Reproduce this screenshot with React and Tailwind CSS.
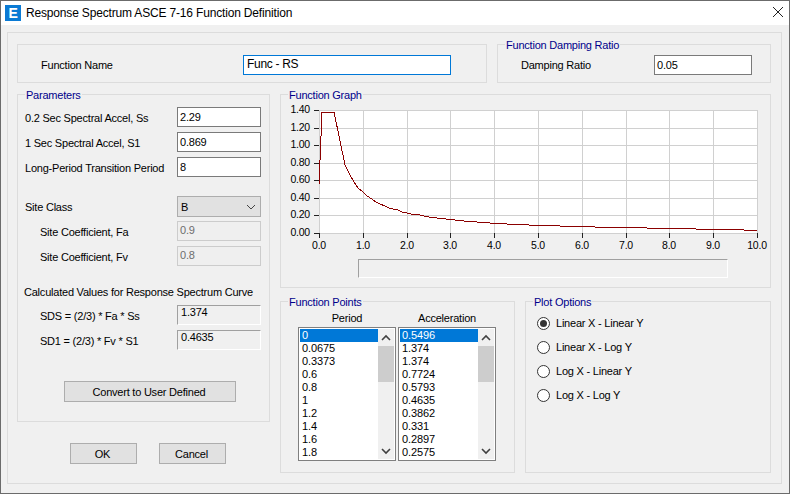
const periods = ["0", "0.0675", "0.3373", "0.6", "0.8", "1", "1.2", "1.4", "1.6", "1.8"];
const accels = ["0.5496", "1.374", "1.374", "0.7724", "0.5793", "0.4635", "0.3862", "0.331", "0.2897", "0.2575"];
const radios = ["Linear X - Linear Y", "Linear X - Log Y", "Log X - Linear Y", "Log X - Log Y"];

// chart coordinates are relative to the svg, which starts at 281,95 in the window
const xTicks = [38, 82, 126, 169, 213, 257, 301, 345, 388, 432, 476];
const yTicks = [15, 33, 50, 68, 85, 103, 120, 138];
const yLabels = ["1.40", "1.20", "1.00", "0.80", "0.60", "0.40", "0.20", "0.00"];

function curvePoints() {
    const data = [[0, 0.5496], [0.0675, 1.374], [0.3373, 1.374]];
    for (let t = 0.6; t <= 10.001; t += 0.1) {
        data.push([t, t <= 8 ? 0.4635 / t : (0.4635 * 8) / (t * t)]);
    }
    return data.map(([t, a]) => `${Math.round(38 + t * 43.8)},${Math.round(138 - a * 87.9)}`).join(" ");
}

function Group({title, className, children}) {
    return (
        <div className={`relative border border-[#dcdcdc] ${className}`}>
            <span className="absolute -top-[7px] left-[7px] bg-[#f0f0f0] px-[1px] text-[#00008b] leading-[14px]">{title}</span>
            {children}
        </div>
    );
}

function Field({value, className = "w-[84px] h-5"}) {
    return (
        <div className={`border border-[#7a7a7a] bg-white pl-[2px] leading-[18px] ${className}`}>{value}</div>
    );
}

function ParamRow({label, indent, className = "", children}) {
    return (
        <div className={`flex items-center ${className}`}>
            <span className={`pt-[2px] ${indent ? "w-[137px] ml-[15px]" : "w-[152px]"}`}>{label}</span>
            {children}
        </div>
    );
}

function Disabled({value}) {
    return (
        <div className="w-[84px] h-5 border border-[#cccccc] bg-[#efefef] pl-[2px] leading-[17px] text-[#6d6d6d]">{value}</div>
    );
}

function Readout({value}) {
    return (
        <div className="w-[84px] h-5 border border-[#a0a0a0] border-r-white border-b-white pl-[3px] leading-[12px]">{value}</div>
    );
}

function Button({className, children}) {
    return (
        <div className={`h-[21px] pt-[1px] pr-[2px] flex items-center justify-center border border-[#adadad] bg-[#e1e1e1] ${className}`}>{children}</div>
    );
}

function Chevron({up}) {
    return (
        <svg width="16" height="17" viewBox="0 0 16 17" className="block">
            <polyline points={up ? "4,11 8,7 12,11" : "4,7 8,11 12,7"} fill="none" stroke="#404040" strokeWidth="1.6"/>
        </svg>
    );
}

function ListBox({items}) {
    return (
        <div className="w-[98px] h-[134px] border border-[#7f7f7f] bg-white p-[1px] flex tracking-[-0.1px]">
            <div className="w-[78px]">
                {items.map((item, i) => (
                    <div key={i} className={`h-[13px] pl-[2px] leading-[13px] ${i === 0 ? "bg-[#0078d7] text-white" : ""}`}>{item}</div>
                ))}
            </div>
            <div className="w-4 h-[130px] bg-[#f0f0f0] flex flex-col">
                <Chevron up/>
                <div className="h-9 bg-[#cdcdcd]"/>
                <div className="mt-auto"><Chevron/></div>
            </div>
        </div>
    );
}

function Graph() {
    return (
        <svg width="489" height="160" className="block" fontFamily="Liberation Sans, sans-serif" fontSize="10.5" fill="#000">
            <rect x="38" y="15" width="438" height="123" fill="#fff"/>
            {xTicks.map((x) => <line key={x} x1={x + 0.5} x2={x + 0.5} y1="15" y2="138" stroke="#d0d0d0"/>)}
            {yTicks.map((y) => <line key={y} x1="38" x2="476" y1={y + 0.5} y2={y + 0.5} stroke="#d0d0d0"/>)}
            {yTicks.map((y) => <line key={y} x1="33" x2="38" y1={y + 0.5} y2={y + 0.5} stroke="#222"/>)}
            {xTicks.map((x) => <line key={x} x1={x + 0.5} x2={x + 0.5} y1="138" y2="143" stroke="#222"/>)}
            {yTicks.map((y, i) => <text key={y} x="29" y={y + 3} textAnchor="end">{yLabels[i]}</text>)}
            {xTicks.map((x, i) => <text key={x} x={x} y="154" textAnchor="middle">{i === 10 ? "10.0" : `${i}.0`}</text>)}
            <polyline points={curvePoints()} fill="none" stroke="#8b0000" strokeWidth="1" shapeRendering="crispEdges"/>
        </svg>
    );
}

export default function App() {
    return (
        <div className="w-[790px] h-[494px] border border-[#6b6b6b] bg-[#f0f0f0] text-black text-[11px] tracking-[-0.22px] overflow-hidden" style={{fontFamily: '"Liberation Sans", sans-serif'}}>
            {/* title bar */}
            <div className="h-6 bg-white flex items-center pl-1 pr-[5px]">
                <div className="w-4 h-4 bg-[#0a7ad4] text-white font-bold text-[14px] leading-4 text-center">E</div>
                <span className="ml-[5px] text-[12px] tracking-[-0.17px]">Response Spectrum ASCE 7-16 Function Definition</span>
                <svg width="12" height="12" viewBox="0 0 12 12" className="ml-auto -mt-[2px]">
                    <path d="M1 1 L11 11 M11 1 L1 11" stroke="#222" strokeWidth="1"/>
                </svg>
            </div>

            <div className="ml-[6px] mt-[7px] w-[775px] h-[452px] border border-[#dcdcdc] pl-[9px] pt-[11px]">
                {/* top row */}
                <div className="flex gap-[10px]">
                    <div className="w-[470px] h-[39px] border border-[#dcdcdc] pl-[23px] pt-[10px] flex">
                        <span className="w-[202px] leading-5">Function Name</span>
                        <div className="w-[208px] h-5 border border-[#0078d7] bg-white pl-[3px] text-[12px] tracking-[-0.3px] leading-[17px]">Func - RS</div>
                    </div>
                    <Group title="Function Damping Ratio" className="w-[274px] h-[39px] pl-[23px] pt-[10px] flex">
                        <span className="w-[133px] leading-5">Damping Ratio</span>
                        <Field value="0.05" className="w-[98px] h-5"/>
                    </Group>
                </div>

                <div className="flex gap-[10px] mt-[11px]">
                    {/* left column */}
                    <div className="w-[253px]">
                        <Group title="Parameters" className="h-[328px] pl-[7px] pt-3">
                            <ParamRow label="0.2 Sec Spectral Accel, Ss"><Field value="2.29"/></ParamRow>
                            <ParamRow label="1 Sec Spectral Accel, S1" className="mt-[5px]"><Field value="0.869"/></ParamRow>
                            <ParamRow label="Long-Period Transition Period" className="mt-[5px]"><Field value="8"/></ParamRow>
                            <ParamRow label="Site Class" className="mt-[19px]">
                                <div className="w-[84px] h-[21px] border border-[#adadad] bg-[#e1e1e1] pl-[3px] pr-[4px] pt-[1px] flex items-center justify-between">
                                    <span>B</span>
                                    <svg width="10" height="6" viewBox="0 0 10 6">
                                        <polyline points="1,1 5,5 9,1" fill="none" stroke="#444" strokeWidth="1"/>
                                    </svg>
                                </div>
                            </ParamRow>
                            <ParamRow indent label="Site Coefficient, Fa" className="mt-1"><Disabled value="0.9"/></ParamRow>
                            <ParamRow indent label="Site Coefficient, Fv" className="mt-[5px]"><Disabled value="0.8"/></ParamRow>
                            <div className="mt-[19px] h-[14px] leading-[14px] -ml-[1px]">Calculated Values for Response Spectrum Curve</div>
                            <ParamRow indent label="SDS = (2/3) * Fa * Ss" className="mt-[6px]"><Readout value="1.374"/></ParamRow>
                            <ParamRow indent label="SD1 = (2/3) * Fv * S1" className="mt-[5px]"><Readout value="0.4635"/></ParamRow>
                            <Button className="w-[172px] ml-[39px] mt-[31px]">Convert to User Defined</Button>
                        </Group>
                        <div className="flex gap-[22px] ml-[53px] mt-[21px]">
                            <Button className="w-[67px]">OK</Button>
                            <Button className="w-[67px]">Cancel</Button>
                        </div>
                    </div>

                    {/* right column */}
                    <div className="w-[491px]">
                        <Group title="Function Graph" className="h-[194px]">
                            <Graph/>
                            <div className="ml-[77px] mt-1 w-[370px] h-[19px] border border-[#a0a0a0] border-r-white border-b-white"/>
                        </Group>
                        <div className="flex gap-[10px] mt-[13px]">
                            <Group title="Function Points" className="w-[235px] h-[172px] pl-[17px] pt-[9px]">
                                <div className="flex gap-[2px]">
                                    <div className="w-[98px]">
                                        <div className="h-[14px] leading-[14px] text-center mb-[2px]">Period</div>
                                        <ListBox items={periods}/>
                                    </div>
                                    <div className="w-[98px]">
                                        <div className="h-[14px] leading-[14px] text-center mb-[2px]">Acceleration</div>
                                        <ListBox items={accels}/>
                                    </div>
                                </div>
                            </Group>
                            <Group title="Plot Options" className="w-[246px] h-[172px] pl-[11px] pt-[9px]">
                                {radios.map((label, i) => (
                                    <div key={label} className="h-6 flex items-center gap-[6px]">
                                        <div className="w-[13px] h-[13px] rounded-full border border-[#333] bg-white flex items-center justify-center">
                                            {i === 0 && <div className="w-[7px] h-[7px] rounded-full bg-[#333]"/>}
                                        </div>
                                        <span>{label}</span>
                                    </div>
                                ))}
                            </Group>
                        </div>
                    </div>
                </div>
            </div>
        </div>
    );
}
